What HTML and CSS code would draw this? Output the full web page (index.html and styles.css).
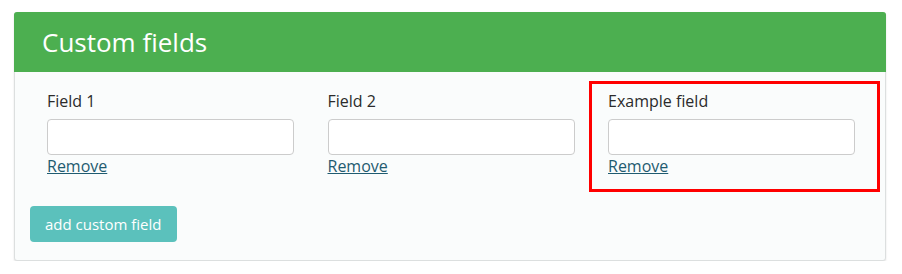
FILE: index.html
```html
<!DOCTYPE html>
<html>
<head>
<meta charset="utf-8">
<link rel="stylesheet" href="styles.css">
</head>
<body>
<div class="panel">
  <div class="panel-heading">Custom fields</div>
  <div class="panel-body">
    <div class="fields">
      <div class="field">
        <label class="field-label">Field 1</label>
        <input class="field-input" type="text">
        <a class="remove" href="#">Remove</a>
      </div>
      <div class="field">
        <label class="field-label">Field 2</label>
        <input class="field-input" type="text">
        <a class="remove" href="#">Remove</a>
      </div>
      <div class="field highlighted">
        <label class="field-label">Example field</label>
        <input class="field-input" type="text">
        <a class="remove" href="#">Remove</a>
      </div>
    </div>
    <button class="add-btn" type="button">add custom field</button>
  </div>
</div>
</body>
</html>
```
FILE: styles.css
```css
html, body {
  margin: 0;
  padding: 0;
  background: #ffffff;
}
body {
  font-family: "Open Sans", "Noto Sans", sans-serif;
  padding: 12px 16px 0 14px;
}
.panel {
  width: 870px;
  border: 1px solid #dcdfdf;
  border-radius: 3px;
  background: #fafcfc;
  box-shadow: 0 1px 2px rgba(0,0,0,0.12);
}
.panel-heading {
  height: 60px;
  box-sizing: border-box;
  margin: -1px -1px 0 -1px;
  background: #4caf50;
  color: #ffffff;
  font-size: 26px;
  line-height: 60px;
  padding-left: 28px;
  border-radius: 3px 3px 0 0;
}
.panel-body {
  padding: 19px 0 18px 15px;
}
.fields {
  display: grid;
  grid-template-columns: repeat(3, 247px);
  column-gap: 33.5px;
  padding-left: 17px;
}
.field {
  display: flex;
  flex-direction: column;
  align-items: flex-start;
}
.highlighted {
  position: relative;
}
.highlighted::after {
  content: "";
  position: absolute;
  top: -10px;
  left: -19px;
  right: -25px;
  bottom: -15px;
  border: 3px solid #ff0000;
  pointer-events: none;
}
.field-label {
  font-size: 16px;
  line-height: 21px;
  color: #2b2b2b;
}
.field-input {
  margin-top: 7px;
  width: 247px;
  height: 36px;
  box-sizing: border-box;
  border: 1px solid #cccccc;
  border-radius: 4px;
  background: #ffffff;
}
.remove {
  margin-top: 1px;
  font-size: 16px;
  line-height: 21px;
  color: #1f5b70;
  text-decoration: underline;
}
.add-btn {
  margin-top: 29px;
  height: 36px;
  padding: 0 15px;
  border: none;
  border-radius: 4px;
  background: #5bc1bc;
  color: #ffffff;
  font-family: "Open Sans", "Noto Sans", sans-serif;
  font-size: 15px;
  line-height: 36px;
}
```
